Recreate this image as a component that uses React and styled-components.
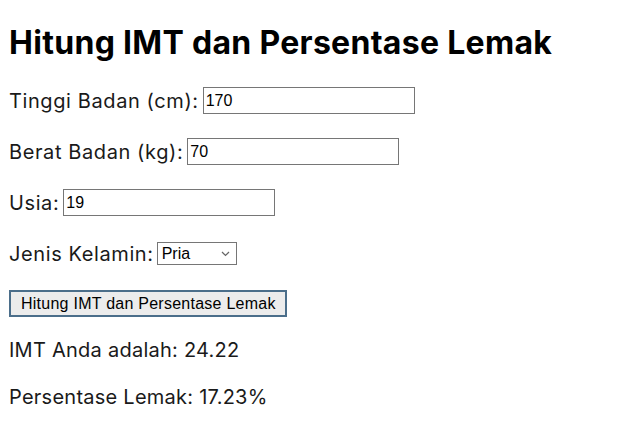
import React from "react";
import styled, { createGlobalStyle } from "styled-components";

const Global = createGlobalStyle`
  html, body { margin: 0; padding: 0; background: #ffffff; }
  body { font-family: Inter, "Open Sans", sans-serif; color: #111111; }
`;

const Main = styled.main`
  display: flex;
  flex-direction: column;
  align-items: flex-start;
  padding: 24px 8px 0 9px;
`;

const Title = styled.h1`
  margin: 0;
  font-size: 32px;
  line-height: 38px;
  font-weight: 700;
  letter-spacing: 0.3px;
  color: #000;
`;

const Form = styled.form`
  display: flex;
  flex-direction: column;
  align-items: flex-start;
  gap: 24px;
  margin-top: 25px;
`;

const Row = styled.div`
  display: flex;
  align-items: center;
  height: 27px;
`;

const Label = styled.label`
  font-size: 20px;
  letter-spacing: 0.6px;
  white-space: pre;
  color: #1a1a1a;
`;

const TextInput = styled.input`
  box-sizing: border-box;
  width: 212px;
  height: 27px;
  margin-left: 4px;
  padding: 1px 2px;
  border: 1px solid #767676;
  border-radius: 0;
  font-family: "Liberation Sans", Arial, sans-serif;
  font-size: 16px;
  color: #000;
  background: #fff;
  outline: none;
`;

const SelectBox = styled.div`
  position: relative;
  box-sizing: border-box;
  width: 80px;
  height: 23px;
  margin-left: 3px;
  border: 1px solid #767676;
  background: #fff;
  display: flex;
  align-items: center;
  padding-left: 4px;
  font-family: "Liberation Sans", Arial, sans-serif;
  font-size: 16px;
  color: #000;
`;

const Chevron = styled.svg`
  position: absolute;
  right: 6px;
  top: 8px;
`;

const Button = styled.button`
  box-sizing: border-box;
  height: 27px;
  margin-top: -1px;
  padding: 0 9px 0 10px;
  border: 2px solid #4b6e8a;
  border-radius: 0;
  background: #ececec;
  font-family: "Liberation Sans", Arial, sans-serif;
  font-size: 16px;
  letter-spacing: 0.25px;
  color: #000;
`;

const Results = styled.div`
  display: flex;
  flex-direction: column;
  gap: 23px;
  margin-top: 21px;
`;

const Result = styled.p`
  margin: 0;
  font-size: 20px;
  line-height: 24px;
  letter-spacing: 0.25px;
  color: #1a1a1a;
`;

export default function App() {
  return (
    <>
      <Global />
      <Main>
        <Title>Hitung IMT dan Persentase Lemak</Title>
        <Form onSubmit={(e) => e.preventDefault()}>
          <Row>
            <Label htmlFor="tinggi">Tinggi Badan (cm):</Label>
            <TextInput id="tinggi" defaultValue="170" />
          </Row>
          <Row>
            <Label htmlFor="berat">Berat Badan (kg):</Label>
            <TextInput id="berat" defaultValue="70" />
          </Row>
          <Row>
            <Label htmlFor="usia">Usia:</Label>
            <TextInput id="usia" defaultValue="19" />
          </Row>
          <Row>
            <Label>Jenis Kelamin:</Label>
            <SelectBox>
              Pria
              <Chevron width="9" height="6" viewBox="0 0 9 6">
                <path d="M1 1 L4.5 4.5 L8 1" fill="none" stroke="#666" strokeWidth="1.2" />
              </Chevron>
            </SelectBox>
          </Row>
          <Button type="submit">Hitung IMT dan Persentase Lemak</Button>
        </Form>
        <Results>
          <Result>IMT Anda adalah: 24.22</Result>
          <Result>Persentase Lemak: 17.23%</Result>
        </Results>
      </Main>
    </>
  );
}
